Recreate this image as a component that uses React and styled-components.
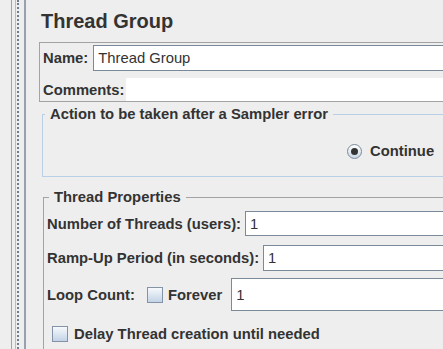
import React from 'react'
import styled, { createGlobalStyle } from 'styled-components'

const Global = createGlobalStyle`
  body {
    margin: 0;
    background: #eeeeee;
    overflow: hidden;
    font-family: "Liberation Sans", Arial, sans-serif;
    color: #333333;
  }
`

const Page = styled.div`
  display: flex;
  width: 443px;
  height: 349px;
  overflow: hidden;
`

const TreePane = styled.div`
  flex: none;
  width: 11px;
  border-right: 1px solid #9aa5b1;
`

const Splitter = styled.div`
  flex: none;
  display: flex;
  width: 9px;
  padding-left: 3px;
  border-right: 2px solid #97a2ae;
`

const Grip = styled.div`
  width: 1px;
  border-left: 1px solid #b4bcc6;
  border-right: 2px dotted #6f7f90;
`

const Main = styled.div`
  flex: none;
  width: 560px;
  padding: 9px 0 0 13px;
`

const Title = styled.h1`
  margin: 0 0 9px 2px;
  font-size: 20px;
  line-height: 24px;
  font-weight: 700;
`

const NamePanel = styled.div`
  display: flex;
  flex-direction: column;
  border: 1px solid #a3a3a3;
  padding: 2px 0 0 3px;
`

const Row = styled.div`
  display: flex;
  align-items: center;
  height: ${p => p.$h}px;
  margin-top: ${p => p.$top || 0}px;
  white-space: nowrap;
`

const Label = styled.span`
  font-size: 14.8px;
  font-weight: 700;
  margin-right: ${p => p.$gap || 0}px;
`

const Field = styled.input`
  flex: 1;
  min-width: 0;
  height: 100%;
  box-sizing: border-box;
  margin: 0 0 0 ${p => p.$left || 0}px;
  padding: 0 4px;
  border: 1px solid #7a8a99;
  background: #ffffff;
  font-family: "Liberation Sans", Arial, sans-serif;
  font-size: 14.8px;
  color: #333333;
  outline: none;
`

const CommentsArea = styled.div`
  flex: 1;
  height: 100%;
  background: #ffffff;
`

const Group = styled.fieldset`
  margin: ${p => p.$top}px 0 0 ${p => p.$left}px;
  padding: ${p => p.$pad};
  border: 1px solid ${p => p.$line};
  min-width: 0;
`

const Legend = styled.legend`
  margin-left: 2px;
  padding: 0 5px;
  font-size: 14.8px;
  line-height: 17px;
  font-weight: 700;
`

const RadioRow = styled.div`
  display: flex;
  align-items: center;
  height: 20px;
  padding: 18px 0 15px 304px;
  white-space: nowrap;
`

const RadioOption = styled.label`
  display: flex;
  align-items: center;
  gap: 8px;
  font-size: 14.8px;
  font-weight: 700;
`

const RadioDot = styled.span`
  display: flex;
  align-items: center;
  justify-content: center;
  width: 15px;
  height: 15px;
  box-sizing: border-box;
  border: 1px solid #7a8a99;
  border-radius: 50%;
  background: linear-gradient(#ffffff, #c9d6e6);
  &::after {
    content: '';
    width: 7px;
    height: 7px;
    border-radius: 50%;
    background: ${p => (p.$on ? '#333333' : 'transparent')};
  }
`

const Box = styled.span`
  flex: none;
  width: 16px;
  height: 16px;
  box-sizing: border-box;
  margin: 0 ${p => p.$right}px 0 ${p => p.$left}px;
  border: 1px solid #8494a6;
  background: linear-gradient(#f6f9fc, #c3d3e6);
`

const Radio = ({ on, children }) => (
  <RadioOption>
    <RadioDot $on={on} />
    {children}
  </RadioOption>
)

const App = () => {
  return (
    <Page>
      <Global />
      <TreePane />
      <Splitter>
        <Grip />
      </Splitter>
      <Main>
        <Title>Thread Group</Title>
        <NamePanel>
          <Row $h={26}>
            <Label $gap={5}>Name:</Label>
            <Field defaultValue="Thread Group" />
          </Row>
          <Row $h={23} $top={7}>
            <Label $gap={2}>Comments:</Label>
            <CommentsArea />
          </Row>
        </NamePanel>

        <Group $top={4} $left={3} $line="#b8cfe5" $pad="0">
          <Legend>Action to be taken after a Sampler error</Legend>
          <RadioRow>
            <Radio on>Continue</Radio>
          </RadioRow>
        </Group>

        <Group $top={12} $left={4} $line="#a3a3a3" $pad="5px 0 40px 3px">
          <Legend>Thread Properties</Legend>
          <Row $h={25}>
            <Label $gap={4}>Number of Threads (users):</Label>
            <Field defaultValue="1" />
          </Row>
          <Row $h={26} $top={9}>
            <Label $gap={4}>Ramp-Up Period (in seconds):</Label>
            <Field defaultValue="1" />
          </Row>
          <Row $h={33} $top={7}>
            <Label>Loop Count:</Label>
            <Box $left={12} $right={5} />
            <Label>Forever</Label>
            <Field defaultValue="1" $left={9} />
          </Row>
          <Row $h={24} $top={11}>
            <Box $left={5} $right={6} />
            <Label>Delay Thread creation until needed</Label>
          </Row>
        </Group>
      </Main>
    </Page>
  )
}

export default App
